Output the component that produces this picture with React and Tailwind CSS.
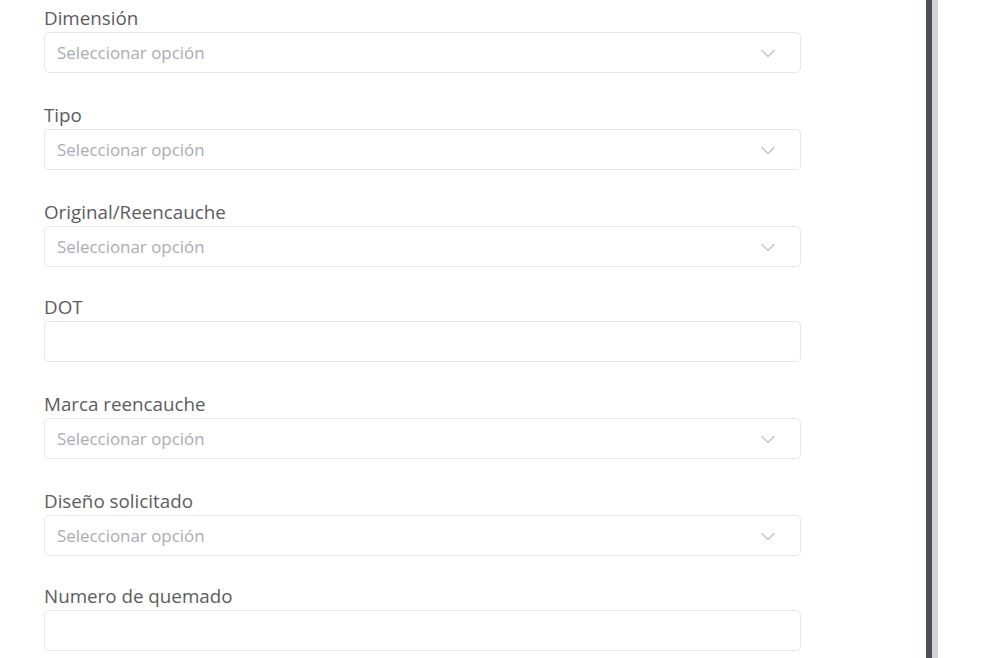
import React from 'react';

const fields = [
  { label: 'Dimensión', type: 'select' },
  { label: 'Tipo', type: 'select' },
  { label: 'Original/Reencauche', type: 'select' },
  { label: 'DOT', type: 'input' },
  { label: 'Marca reencauche', type: 'select' },
  { label: 'Diseño solicitado', type: 'select' },
  { label: 'Numero de quemado', type: 'input' },
];

const Chevron = () => (
  <svg width="16" height="16" viewBox="0 0 16 16" fill="none" className="text-[#b9bcc1]">
    <path d="M2 5.5l6 6 6-6" stroke="currentColor" strokeWidth="1.1" strokeLinecap="round" strokeLinejoin="round" />
  </svg>
);

const Field = ({ label, type }) => (
  <div className={type === 'input' ? '-mt-[2px] mb-[30px]' : 'mb-[30px]'}>
    <label className="block h-[24px] mb-[2px] text-[18.8px] leading-[24px] text-[#5a5c60]">{label}</label>
    {type === 'select' ? (
      <div className="flex h-[41px] items-center justify-between rounded-[5px] border border-[#e6e7e9] pl-[12px] pr-[24px]">
        <span className="text-[16.9px] text-[#a9adb3]">Seleccionar opción</span>
        <Chevron />
      </div>
    ) : (
      <input className="block h-[41px] w-full rounded-[5px] border border-[#e6e7e9] px-[12px] outline-none" />
    )}
  </div>
);

export default function App() {
  return (
    <div className="flex h-[658px] overflow-hidden bg-white" style={{ fontFamily: '"Open Sans", sans-serif' }}>
      <div className="w-[926px] shrink-0 pl-[44px] pt-[6px]">
        <div className="w-[757px]">
          {fields.map((f) => (
            <Field key={f.label} {...f} />
          ))}
        </div>
      </div>
      <div className="w-[6px] shrink-0 bg-[#4b5059]" />
      <div className="w-[6px] shrink-0 bg-[#d3d6d5]" />
      <div className="flex-1 bg-white" />
    </div>
  );
}
